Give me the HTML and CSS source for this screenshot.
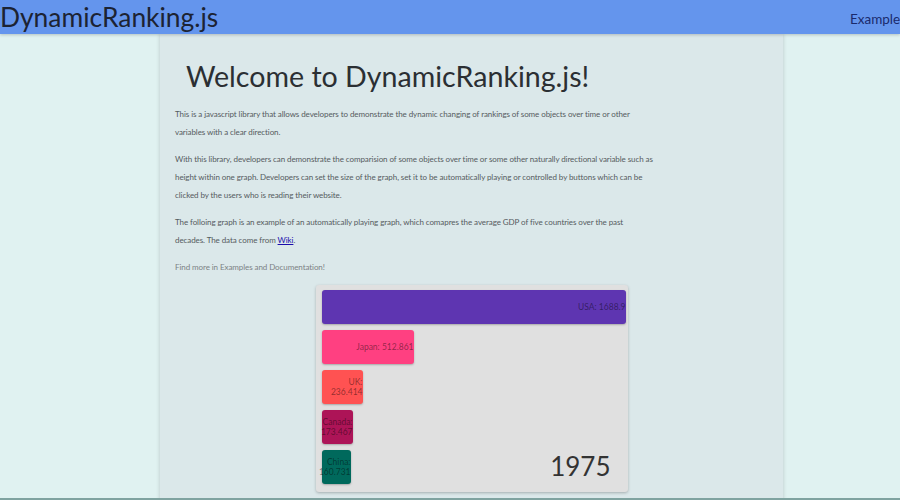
FILE: index.html
```html
<!DOCTYPE html>
<html>
<head>
<meta charset="utf-8">
<link rel="stylesheet" href="styles.css">
</head>
<body>
<header class="topbar">
  <div class="brand">DynamicRanking.js</div>
  <nav class="nav"><a class="nav-link">Examples</a></nav>
</header>
<main class="page">
  <h1 class="title">Welcome to DynamicRanking.js!</h1>
  <p class="text">This is a javascript library that allows developers to demonstrate the dynamic changing of rankings of some objects over time or other<br>variables with a clear direction.</p>
  <p class="text">With this library, developers can demonstrate the comparision of some objects over time or some other naturally directional variable such as<br>height within one graph. Developers can set the size of the graph, set it to be automatically playing or controlled by buttons which can be<br>clicked by the users who is reading their website.</p>
  <p class="text">The folloing graph is an example of an automatically playing graph, which comapres the average GDP of five countries over the past<br>decades. The data come from <a class="link" href="#">Wiki</a>.</p>
  <p class="text muted">Find more in Examples and Documentation!</p>
  <div class="chart">
    <div class="bar usa" style="width:304px"><span class="label">USA: 1688.9</span></div>
    <div class="bar japan" style="width:92px"><span class="label">Japan: 512.861</span></div>
    <div class="bar uk" style="width:41px"><span class="label">UK:<br>236.414</span></div>
    <div class="bar canada" style="width:31px"><span class="label">Canada:<br>173.467</span></div>
    <div class="bar china" style="width:29px"><span class="label">China:<br>160.731</span></div>
    <div class="year">1975</div>
  </div>
</main>
<div class="bottom-line"></div>
</body>
</html>
```
FILE: styles.css
```css
html, body {
  margin: 0;
  padding: 0;
}
body {
  background: #e0f2f1;
  font-family: Lato, "Open Sans", sans-serif;
  color: #333;
  height: 500px;
  overflow: hidden;
  position: relative;
}
.topbar {
  height: 34px;
  background: #6495ed;
  display: flex;
  align-items: center;
  justify-content: space-between;
  box-shadow: 0 1px 3px rgba(0,0,0,0.2);
  position: relative;
  z-index: 2;
  white-space: nowrap;
  overflow: hidden;
}
.brand {
  font-size: 26.4px;
  color: #1c2333;
  line-height: 34px;
}
.nav {
  margin-right: -6px;
}
.nav-link {
  font-size: 13.5px;
  color: #1a2a6c;
}
.page {
  width: 593px;
  margin: 0 0 0 160px;
  padding: 22px 15px 0;
  background: #dbe8ea;
  min-height: 500px;
  box-shadow: 0 0 4px rgba(0,0,0,0.18);
}
.title {
  margin: 0 0 9px 11px;
  font-weight: 400;
  font-size: 28.6px;
  line-height: 40px;
  color: #2b2f33;
}
.text {
  margin: 0 0 9px;
  font-size: 8px;
  letter-spacing: -0.08px;
  line-height: 18px;
  color: #555b5e;
  white-space: nowrap;
}
.muted {
  color: #7b8285;
}
.link {
  color: #1a0dab;
}
.chart {
  width: 306px;
  margin: 9px auto 0;
  padding: 5px 0 8px 6px;
  background: #e0e0e0;
  border-radius: 3px;
  box-shadow: 0 1px 3px rgba(0,0,0,0.25);
  display: flex;
  flex-direction: column;
  gap: 6px;
  position: relative;
}
.bar {
  height: 34px;
  border-radius: 3px;
  box-shadow: 0 1px 2px rgba(0,0,0,0.25);
  display: flex;
  align-items: center;
  justify-content: flex-end;
}
.label {
  font-size: 8.5px;
  line-height: 10px;
  text-align: right;
  color: rgba(0,0,0,0.45);
  white-space: nowrap;
}
.usa { background: #5e35b1; }
.japan { background: #ff4081; }
.uk { background: #ff5252; }
.canada { background: #ad1457; }
.china { background: #00695c; }
.year {
  position: absolute;
  right: 17px;
  bottom: 10px;
  font-size: 26px;
  line-height: normal;
  color: #333;
}
.bottom-line {
  position: absolute;
  left: 0;
  right: 0;
  bottom: 0;
  height: 2px;
  background: #7fa3a0;
  z-index: 3;
}
```
